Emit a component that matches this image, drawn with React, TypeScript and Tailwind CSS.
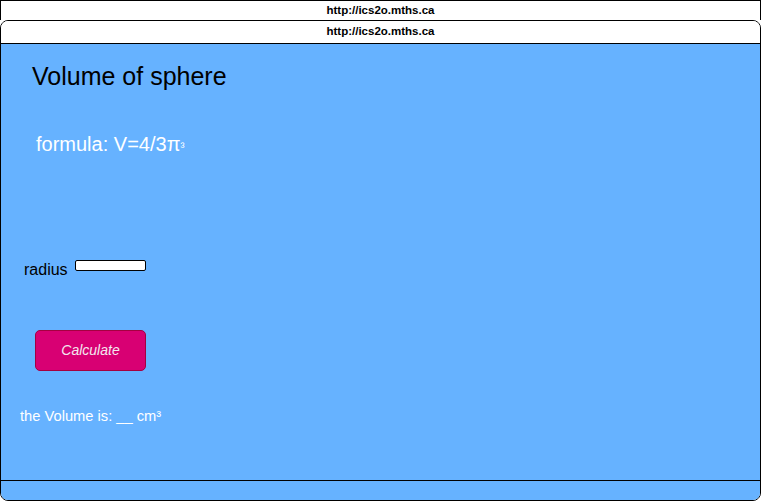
export default function App() {
  const font = { fontFamily: '"Liberation Sans", Arial, sans-serif' }
  return (
    <div className="flex h-[501px] w-[761px] flex-col bg-white" style={font}>
      <div className="flex h-[20px] items-center justify-center border-x border-t border-black text-[11.5px] font-bold leading-none text-black">
        http://ics2o.mths.ca
      </div>
      <div className="flex h-[481px] flex-col overflow-hidden rounded-[8px] border border-black">
        <div className="flex h-[23px] items-center justify-center border-b border-black bg-white text-[11.5px] font-bold leading-none text-black">
          http://ics2o.mths.ca
        </div>
        <main className="flex-1 bg-[#66b2ff]">
          <h1 className="ml-[31px] mt-[18px] text-[25px] leading-[29px] text-black">
            Volume of sphere
          </h1>
          <p className="ml-[35px] mt-[41px] h-[24px] text-[20px] leading-[24px] text-white">
            formula: V=4/3π<span className="text-[12px] leading-none">³</span>
          </p>
          <div className="ml-[23px] mt-[104px] flex items-start gap-[7px]">
            <span className="text-[16px] leading-[20px] text-black">radius</span>
            <input
              type="text"
              className="h-[11px] w-[71px] rounded-[2px] border border-black bg-white"
            />
          </div>
          <button className="ml-[34px] mt-[50px] flex h-[41px] w-[111px] items-center justify-center rounded-[5px] border border-[#a50040] bg-[#d80073] text-[14px] italic text-[#f3e8ee]">
            Calculate
          </button>
          <p className="ml-[19px] mt-[36px] text-[14.7px] leading-[18px] text-white">
            the Volume is: __ cm³
          </p>
        </main>
        <div className="h-[20px] border-t border-black bg-[#66b2ff]" />
      </div>
    </div>
  )
}
